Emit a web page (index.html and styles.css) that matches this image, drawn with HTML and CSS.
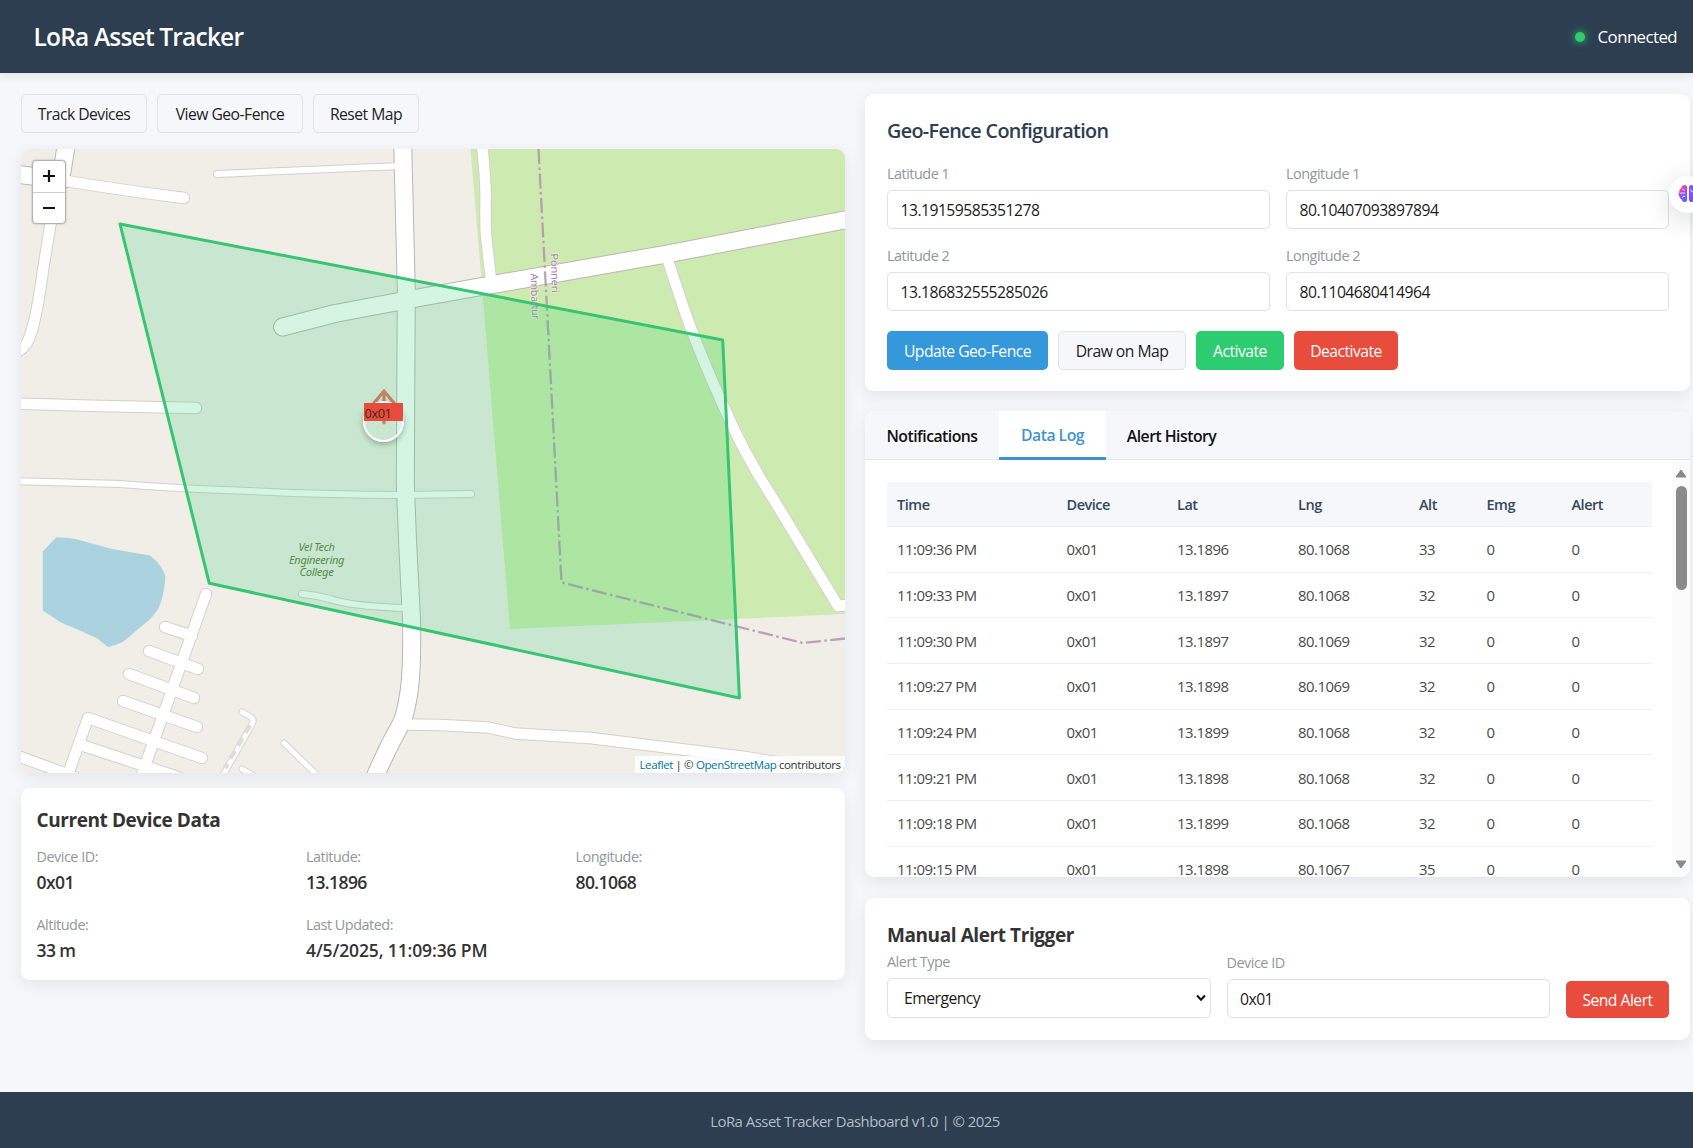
FILE: index.html
```html
<!DOCTYPE html>
<html lang="en">
<head>
<meta charset="utf-8">
<title>LoRa Asset Tracker</title>
<link rel="stylesheet" href="styles.css">
</head>
<body>
<header class="topbar">
  <h1>LoRa Asset Tracker</h1>
  <div class="status"><span class="dot"></span><span>Connected</span></div>
</header>
<main class="layout">
  <section class="left">
    <div class="row map-buttons">
      <button class="btn w125">Track Devices</button>
      <button class="btn w146">View Geo-Fence</button>
      <button class="btn w106">Reset Map</button>
    </div>
    <div class="map">
      <svg class="tiles" viewBox="21 149 824 624">
        <rect x="21" y="149" width="824" height="624" fill="#f1eee8"/>
        <path d="M470.5 149L481.5 280L510 629L845 614V149z" fill="#cdebb0"/>
        <path d="M42.700 551.500L56 537.500Q68 537 77.500 539.500L112 549L150 555.500Q158 562 161 567Q166 575 165.300 578Q164 596 158.500 608.500Q152 618 148 621L137 630Q126 640 122.500 642Q115 645.500 108 647L96.500 638L73 627.500Q60 623 55 618.500L42.700 610.500z" fill="#aad3df"/>
        <defs>
          <g id="wide">
            <path d="M402.600 140L406.300 290L405.300 483L407.500 540L411.500 620Q412.500 665 409.300 690Q406 712 402 722Q385 752 373 782"/>
            <path d="M282.500 327L335 313.500Q385 304 420 297.500L490 285L667 254L855 218"/>
            <path d="M67 140L62 172M15 174L62 180"/>
          </g>
          <g id="mid">
            <path d="M481.500 140Q485 170 485.700 195Q485 230 486.500 240L491 280"/>
            <path d="M667 258L685 312Q700 355 728 416Q745 455 774 500L800 543L838 606L855 604"/>
            <path d="M62 172L50 227L43 270Q37 315 31 333Q27 348 15 353"/>
            <path d="M60 180Q120 190 184 198"/>
            <path d="M15 403.500L100 406L196 408"/>
            <path d="M403 724.500L440 725L488 727.500L515 733.500L590 738L655 746L745 757L850 774"/>
            <path d="M206 594L140 780M165 627L192 636M149 651L198 669M129 674L194 698M123 701L197 727M66 780L88 718L202 758M84 746L178 777M15 755L75 777"/>
          </g>
          <g id="thin"><path d="M217 174Q300 170 403 166M15 481L120 484Q180 489 250 491Q330 495 405 495L471 494M302 594Q315 595 330 599Q350 606 403 608"/></g>
          <g id="tiny"><path d="M242 712L251 717Q255 720 251 726L222 777M284 743L322 780M242 769L256 777"/></g>
        </defs>
        <g fill="none" stroke="#d3d0cc" stroke-linecap="round" stroke-linejoin="round">
          <use href="#tiny" stroke-width="7"/><use href="#thin" stroke-width="8"/><use href="#mid" stroke-width="12.400"/><use href="#wide" stroke="#bab7b2" stroke-width="19"/>
        </g>
        <g fill="none" stroke="#fff" stroke-linecap="round" stroke-linejoin="round">
          <use href="#tiny" stroke-width="5.200"/><use href="#thin" stroke-width="6"/><use href="#mid" stroke-width="10.400"/><use href="#wide" stroke-width="17"/>
        </g>
        <path d="M250 725L225 768" stroke="#deddda" stroke-width="4.500" stroke-dasharray="9 6" fill="none"/>
        <path d="M538.500 149L546 290L561.500 582.500L803 643L845 638.500" fill="none" stroke="#b193ae" stroke-width="2.300" stroke-dasharray="15 3.500 2.500 3.500" opacity=".85"/>
        <g class="boundary-label">
          <text transform="translate(550.500 253.500) rotate(88)" textLength="39" lengthAdjust="spacingAndGlyphs">Ponneri</text>
          <text transform="translate(530.500 273.500) rotate(88)" textLength="46" lengthAdjust="spacingAndGlyphs">Ambattur</text>
        </g>
        <g class="place-label">
          <text x="316.500" y="551" textLength="36" lengthAdjust="spacingAndGlyphs">Vel Tech</text>
          <text x="316.500" y="563.500" textLength="55" lengthAdjust="spacingAndGlyphs">Engineering</text>
          <text x="316.500" y="576" textLength="34" lengthAdjust="spacingAndGlyphs">College</text>
        </g>
        <path d="M120 224L722.700 340L739.400 698L209.300 583.300z" fill="#2ecc71" fill-opacity=".2" stroke="#2ecc71" stroke-width="3" stroke-linejoin="round"/>
        <path d="M120 224L722.700 340L739.400 698L209.300 583.300z" fill="none" stroke="#3fc074" stroke-width="1.600"/>
      </svg>
      <div class="marker">
        <svg viewBox="0 0 44 54"><path d="M22 3V35M22 3L12 15M22 3L32 15" fill="none" stroke="#c58466" stroke-width="3.200" stroke-linecap="round"/></svg>
        <span class="ring"></span>
        <span class="tag">0x01</span>
      </div>
      <div class="zoom">
        <span><svg viewBox="0 0 14 14"><path d="M1 7H13M7 1V13"/></svg></span>
        <span><svg viewBox="0 0 14 14"><path d="M1 7H13"/></svg></span>
      </div>
      <div class="attribution"><a>Leaflet</a> | © <a>OpenStreetMap</a> contributors</div>
    </div>
    <div class="card device">
      <h3>Current Device Data</h3>
      <div class="device-grid">
        <div><label>Device ID:</label><strong>0x01</strong></div>
        <div><label>Latitude:</label><strong>13.1896</strong></div>
        <div><label>Longitude:</label><strong>80.1068</strong></div>
        <div><label>Altitude:</label><strong>33 m</strong></div>
        <div><label>Last Updated:</label><strong class="stamp">4/5/2025, 11:09:36 PM</strong></div>
      </div>
    </div>
  </section>
  <section class="right">
    <div class="card config">
      <h2>Geo-Fence Configuration</h2>
      <div class="fields">
        <div><label>Latitude 1</label><input value="13.19159585351278"></div>
        <div><label>Longitude 1</label><input value="80.10407093897894"></div>
        <div><label>Latitude 2</label><input value="13.186832555285026"></div>
        <div><label>Longitude 2</label><input value="80.1104680414964"></div>
      </div>
      <div class="row">
        <button class="btn blue w162">Update Geo-Fence</button>
        <button class="btn w128">Draw on Map</button>
        <button class="btn green w88">Activate</button>
        <button class="btn red w104">Deactivate</button>
      </div>
    </div>
    <div class="card log">
      <nav class="tabs"><span class="t1">Notifications</span><span class="t2 active">Data Log</span><span class="t3">Alert History</span></nav>
      <div class="log-body">
        <table>
          <colgroup><col class="c1"><col class="c2"><col class="c3"><col class="c4"><col class="c5"><col class="c6"><col></colgroup>
          <thead><tr><th>Time</th><th>Device</th><th>Lat</th><th>Lng</th><th>Alt</th><th>Emg</th><th>Alert</th></tr></thead>
          <tbody>
            <tr><td>11:09:36 PM</td><td>0x01</td><td>13.1896</td><td>80.1068</td><td>33</td><td>0</td><td>0</td></tr>
            <tr><td>11:09:33 PM</td><td>0x01</td><td>13.1897</td><td>80.1068</td><td>32</td><td>0</td><td>0</td></tr>
            <tr><td>11:09:30 PM</td><td>0x01</td><td>13.1897</td><td>80.1069</td><td>32</td><td>0</td><td>0</td></tr>
            <tr><td>11:09:27 PM</td><td>0x01</td><td>13.1898</td><td>80.1069</td><td>32</td><td>0</td><td>0</td></tr>
            <tr><td>11:09:24 PM</td><td>0x01</td><td>13.1899</td><td>80.1068</td><td>32</td><td>0</td><td>0</td></tr>
            <tr><td>11:09:21 PM</td><td>0x01</td><td>13.1898</td><td>80.1068</td><td>32</td><td>0</td><td>0</td></tr>
            <tr><td>11:09:18 PM</td><td>0x01</td><td>13.1899</td><td>80.1068</td><td>32</td><td>0</td><td>0</td></tr>
            <tr><td>11:09:15 PM</td><td>0x01</td><td>13.1898</td><td>80.1067</td><td>35</td><td>0</td><td>0</td></tr>
          </tbody>
        </table>
        <div class="scrollbar">
          <svg viewBox="0 0 12 9"><path d="M6 1L11 8H1z"/></svg>
          <i></i>
          <svg class="down" viewBox="0 0 12 9"><path d="M6 8L1 1H11z"/></svg>
        </div>
      </div>
    </div>
    <div class="card alert">
      <h3>Manual Alert Trigger</h3>
      <div class="alert-row">
        <div class="kind"><label>Alert Type</label><div class="select">Emergency<svg viewBox="0 0 10 8"><path d="M1 1.500L5 5.800L9 1.500"/></svg></div></div>
        <div class="target"><label>Device ID</label><input value="0x01"></div>
        <button class="btn red send">Send Alert</button>
      </div>
    </div>
  </section>
</main>
<footer>LoRa Asset Tracker Dashboard v1.0 | © 2025</footer>
<div class="assistant">
  <svg viewBox="0 0 22 22">
    <defs><linearGradient id="bg" x1="0" y1="0" x2=".5" y2="1"><stop offset="0" stop-color="#ff8a3c"/><stop offset=".3" stop-color="#ee3fa0"/><stop offset=".6" stop-color="#a04cf0"/><stop offset="1" stop-color="#4a6cf5"/></linearGradient></defs>
    <path d="M10 3Q9 .5 6.500 1.500Q3.500 2 3.500 5Q.800 6 1.500 9Q-.500 11 1.500 13.500Q1.500 16.500 4 17Q5 20.500 8 19.800Q10 19.500 10 17z" fill="url(#bg)"/>
    <path d="M12 3Q13 .5 15.500 1.500Q18.500 2 18.500 5Q21.200 6 20.500 9Q22.500 11 20.500 13.500Q20.500 16.500 18 17Q17 20.500 14 19.800Q12 19.500 12 17z" fill="#7b55f0"/>
    <path d="M2 10H8M5 5.500Q7 5.500 7 7.500M5 15Q5 13 8 13.500M14 6Q14 9 17 9" fill="none" stroke="#fff" stroke-width=".9"/>
  </svg>
</div>
</body>
</html>
```
FILE: styles.css
```css
* { box-sizing: border-box; letter-spacing: -0.033em; }
html, body { margin: 0; height: 1148px; overflow: hidden; }
body { position: relative; background: #f5f7fb; color: #333; font-family: "Open Sans", "Noto Sans", sans-serif; display: flex; flex-direction: column; }
h1, h2, h3 { margin: 0; }
.topbar { height: 73px; flex: none; background: #2c3e50; color: #fff; display: flex; justify-content: space-between; align-items: center; padding: 0 16px 0 33.500px; box-shadow: 0 2px 10px rgba(0,0,0,.1); }
.topbar h1 { font-size: 24.500px; line-height: 34px; padding-top: 1px; font-weight: 600; }
.status { display: flex; align-items: center; gap: 13px; font-size: 16.800px; line-height: 24px; }
.dot { width: 10px; height: 10px; margin-top: 1px; border-radius: 50%; background: #2ecc71; box-shadow: 0 0 8px #2ecc71; }
.layout { display: flex; gap: 20px; padding: 21px 0 0 21px; flex: 1; }
.left { width: 824px; }
.right { width: 825px; display: flex; flex-direction: column; gap: 20px; }
.row { display: flex; gap: 10px; }
.btn { height: 39px; padding: 1px 0 0; flex: none; border: 1px solid #dfe1e6; border-radius: 5px; background: #f5f7fb; color: #222; font: 15.700px/30px "Open Sans", sans-serif; white-space: nowrap; }
.blue, .green, .red { border: 0; color: #fff; }
.blue { background: #3498db; } .green { background: #2ecc71; } .red { background: #e74c3c; }
.w125 { width: 126px; } .w146 { width: 146px; } .w106 { width: 106px; } .w162 { width: 161px; } .w128 { width: 128px; } .w88 { width: 88px; } .w104 { width: 104px; }
.map { position: relative; width: 824px; height: 624px; margin-top: 16px; border-radius: 9px; overflow: hidden; box-shadow: 0 4px 16px rgba(0,0,0,.08); }
.tiles { display: block; width: 824px; height: 624px; }
.boundary-label { font: 10.500px "Noto Sans", sans-serif; fill: #ac83ac; paint-order: stroke; stroke: rgba(255,255,255,.5); stroke-width: 1.500px; }
.place-label { font: italic 11px "Noto Sans", sans-serif; fill: #5f7d3c; text-anchor: middle; }
.marker { position: absolute; left: 340.500px; top: 239px; width: 44px; height: 54px; }
.marker svg { position: absolute; left: 0; top: 0; width: 44px; height: 54px; }
.ring { position: absolute; left: 1px; top: 13px; width: 41px; height: 41px; border: 2px solid #fff; border-radius: 50%; box-shadow: 0 2px 6px rgba(0,0,0,.3); }
.tag { position: absolute; left: 2px; top: 14.500px; width: 39px; height: 18.500px; padding-left: 1px; background: #e74c3c; color: #4a2522; font-size: 12.800px; line-height: 20px; }
.zoom { position: absolute; left: 11px; top: 11px; width: 34px; height: 64px; border: 1px solid #b5b3af; border-radius: 4px; background: #fff; box-shadow: 0 0 2px rgba(0,0,0,.3); display: flex; flex-direction: column; }
.zoom span { flex: 1; display: flex; align-items: center; justify-content: center; }
.zoom span + span { border-top: 1px solid #ccc; }
.zoom svg { width: 14px; height: 14px; stroke: #111; stroke-width: 2.200; fill: none; }
.attribution { position: absolute; right: 0; bottom: 0; width: 210px; height: 17.500px; padding-left: 4.500px; background: rgba(255,255,255,.8); font-size: 11.500px; line-height: 17px; letter-spacing: -0.035em; white-space: nowrap; }
.attribution a { color: #0078a8; }
.card { background: #fff; border-radius: 9px; box-shadow: 0 5px 16px rgba(0,0,0,.08); }
.device { height: 192px; margin-top: 15px; padding: 19px 16px 0 15.500px; }
h3 { font-size: 19px; line-height: 26px; font-weight: 700; letter-spacing: -0.022em; }
.device-grid { display: grid; grid-template-columns: repeat(3, 269.500px); row-gap: 16px; margin-top: 13px; }
.device-grid label { line-height: 22px; }
.device-grid strong { display: block; margin-bottom: 2px; height: 28px; font-size: 17.500px; line-height: 28px; font-weight: 600; }
.device-grid .stamp { letter-spacing: -0.007em; }
label { display: block; font-size: 14.400px; line-height: 20px; color: #8f989a; }
input { display: block; width: 100%; height: 39px; padding: 1px 12.500px 0; border: 1px solid #dfe1e5; border-radius: 5px; background: #fff; color: #1c1c1c; font: 15.700px "Open Sans", sans-serif; }
.config { height: 297px; padding: 22px 21px 22px 22px; }
.config h2 { font-size: 19.800px; line-height: 30px; font-weight: 600; color: #2c3e50; }
.fields { display: grid; grid-template-columns: 1fr 1fr; column-gap: 16px; row-gap: 17px; margin: 17.500px 0 20.500px; }
.fields label { margin-bottom: 6px; }
.log { height: 465.500px; overflow: hidden; }
.tabs { display: flex; height: 49px; background: #f5f7fb; border-bottom: 1px solid #e3e7ec; color: #111; font-size: 15.800px; line-height: 50px; font-weight: 600; text-align: center; }
.t1 { width: 134px; } .t2 { width: 107px; } .t3 { width: 131px; }
.active { background: #fff; color: #3f93cf; line-height: 48px; height: 49px; border-bottom: 3px solid #3f93cf; }
.log-body { display: flex; justify-content: space-between; padding-left: 22px; height: 416.500px; }
table { width: 764.500px; height: 0; margin-top: 22px; border-collapse: separate; border-spacing: 0; table-layout: fixed; font-size: 14.900px; color: #4a4a4a; text-align: left; }
.c1 { width: 169.500px; } .c2 { width: 110.500px; } .c3 { width: 121px; } .c4 { width: 121px; } .c5 { width: 67.500px; } .c6 { width: 85px; }
th { height: 45px; padding: 0 0 0 10px; background: #f5f7fb; color: #34495e; font-size: 14.500px; font-weight: 600; border-bottom: 1.500px solid #edf0f4; }
td { height: 45.700px; padding: 0 0 0 10px; border-bottom: 1.500px solid #edf0f2; }
.scrollbar { width: 18px; background: #fbfbfb; display: flex; flex-direction: column; align-items: center; padding: 9px 0 8px; }
.scrollbar svg { width: 12px; height: 9px; fill: #888; stroke: #888; stroke-linejoin: round; flex: none; }
.scrollbar i { width: 11px; height: 104px; margin-top: 8px; border-radius: 6px; background: #8b8b8b; flex: none; }
.scrollbar .down { margin-top: auto; }
.alert { height: 142px; margin-top: 1px; padding: 24px 21px 0 22px; flex: none; }
.alert-row { display: flex; gap: 16px; align-items: flex-end; height: 70.500px; }
.kind, .target { width: 323.500px; }
.kind label, .target label { margin-bottom: 6px; }
.select { height: 40.500px; padding: 1px 4px 0 16px; border: 1px solid #dfe1e5; border-radius: 5px; color: #1c1c1c; font-size: 15.700px; display: flex; align-items: center; justify-content: space-between; }
.select svg { width: 10px; height: 8px; fill: none; stroke: #111; stroke-width: 2; }
.send { width: 103px; height: 37px; }
footer { height: 56px; flex: none; padding-left: 17px; background: #2c3e50; color: #b4bdc5; font-size: 14.900px; line-height: 58px; text-align: center; }
.assistant { position: absolute; left: 1669px; top: 176px; width: 38px; height: 37px; border-radius: 50%; background: #fff; box-shadow: 0 6px 28px rgba(0,0,0,.16); padding: 8px 0 0 9px; }
.assistant svg { display: block; width: 20px; height: 20px; }
```
